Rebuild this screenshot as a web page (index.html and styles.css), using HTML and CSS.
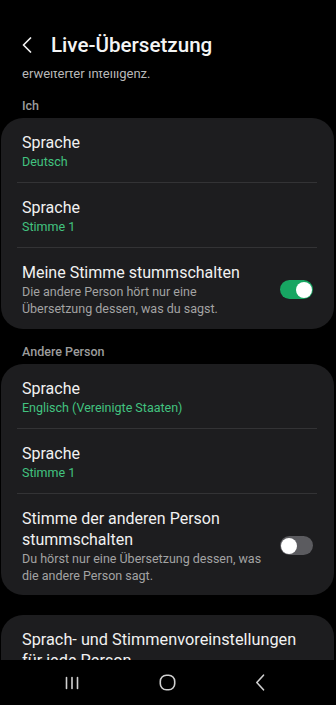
FILE: index.html
```html
<!DOCTYPE html>
<html lang="de">
<head>
<meta charset="utf-8">
<title>Live-Übersetzung</title>
<link rel="stylesheet" href="styles.css">
</head>
<body>
<div class="screen">
  <header class="header">
    <svg class="back" width="10" height="16" viewBox="0 0 10 16"><path d="M8.5 1 L1.5 8 L8.5 15" fill="none" stroke="#f2f2f2" stroke-width="1.7" stroke-linecap="round" stroke-linejoin="round"/></svg>
    <h1 class="title">Live-Übersetzung</h1>
  </header>
  <main class="content">
    <p class="intro">erweiterter Intelligenz.</p>
    <div class="label">Ich</div>
    <section class="card">
      <div class="row">
        <div class="text"><div class="rtitle">Sprache</div><div class="rsub green">Deutsch</div></div>
      </div>
      <div class="divider"></div>
      <div class="row">
        <div class="text"><div class="rtitle">Sprache</div><div class="rsub green">Stimme 1</div></div>
      </div>
      <div class="divider"></div>
      <div class="row last">
        <div class="text"><div class="rtitle">Meine Stimme stummschalten</div><div class="rsub gray">Die andere Person hört nur eine Übersetzung dessen, was du sagst.</div></div>
        <div class="switch on"><span class="thumb"></span></div>
      </div>
    </section>
    <div class="label">Andere Person</div>
    <section class="card">
      <div class="row">
        <div class="text"><div class="rtitle">Sprache</div><div class="rsub green">Englisch (Vereinigte Staaten)</div></div>
      </div>
      <div class="divider"></div>
      <div class="row">
        <div class="text"><div class="rtitle">Sprache</div><div class="rsub green">Stimme 1</div></div>
      </div>
      <div class="divider"></div>
      <div class="row last">
        <div class="text"><div class="rtitle">Stimme der anderen Person stummschalten</div><div class="rsub gray">Du hörst nur eine Übersetzung dessen, was die andere Person sagt.</div></div>
        <div class="switch off"><span class="thumb"></span></div>
      </div>
    </section>
    <section class="card card3">
      <div class="row">
        <div class="text"><div class="rtitle wide">Sprach- und Stimmenvoreinstellungen für jede Person</div></div>
      </div>
    </section>
  </main>
  <nav class="navbar">
    <svg width="14" height="14" viewBox="0 0 14 14"><path d="M1.5 1.5V12.5M7 1.5V12.5M12.5 1.5V12.5" stroke="#d0d0d0" stroke-width="1.6" stroke-linecap="round"/></svg>
    <svg width="17" height="17" viewBox="0 0 17 17"><rect x="1.3" y="1.3" width="14.4" height="14.4" rx="6" fill="none" stroke="#d0d0d0" stroke-width="1.6"/></svg>
    <svg width="10" height="17" viewBox="0 0 10 17"><path d="M8.5 1.2 L1.8 8.5 L8.5 15.8" fill="none" stroke="#d0d0d0" stroke-width="1.6" stroke-linecap="round" stroke-linejoin="round"/></svg>
  </nav>
</div>
</body>
</html>
```
FILE: styles.css
```css
* { box-sizing: border-box; }
html, body { margin: 0; padding: 0; background: #000; }
body { font-family: Roboto, "Noto Sans", sans-serif; color: #f2f2f2; }
.screen { width: 336px; height: 705px; display: flex; flex-direction: column; overflow: hidden; }
.header { height: 71px; flex: none; display: flex; align-items: center; padding: 19px 0 0 22px; gap: 19px; }
.back { display: block; }
.title { margin: 0; font-size: 20.6px; font-weight: 500; line-height: 26px; color: #f4f4f4; letter-spacing: 0; }
.content { flex: none; height: 589px; overflow: hidden; padding: 0 2px 0 1px; }
.intro { margin: -6px 0 0; padding: 0 21px; font-size: 13px; line-height: 18px; color: #b8b8b8; }
.label { padding: 14px 21px 3px; font-size: 12.5px; line-height: 18px; color: #9c9c9c; font-weight: 500; }
.card { background: #1d1d1f; border-radius: 22px; }
.row { display: flex; align-items: center; padding: 14px 21px 12px; gap: 12px; }
.row.last { padding-bottom: 11.5px; }
.text { flex: 1; min-width: 0; }
.rtitle { font-size: 16px; line-height: 21px; color: #f1f1f1; }
.rtitle.wide { font-size: 16.3px; }
.rsub { font-size: 12.5px; line-height: 17px; }
.green { color: #42c380; }
.gray { color: #a3a3a3; }
.divider { height: 1px; background: #333335; margin: 0 17px 0 16px; }
.switch { flex: none; width: 33px; height: 19px; border-radius: 10px; position: relative; }
.switch.on { background: #17a662; }
.switch.off { background: #5b5b5f; }
.thumb { position: absolute; top: 1.5px; width: 16px; height: 16px; border-radius: 50%; background: #fff; }
.switch.on .thumb { right: 1.5px; }
.switch.off .thumb { left: 1px; }
.card3 { margin-top: 20px; }
.navbar { flex: 1; display: flex; justify-content: space-between; align-items: center; padding: 0 71px 0 65px; background: #000; }
.navbar svg { display: block; }
```
